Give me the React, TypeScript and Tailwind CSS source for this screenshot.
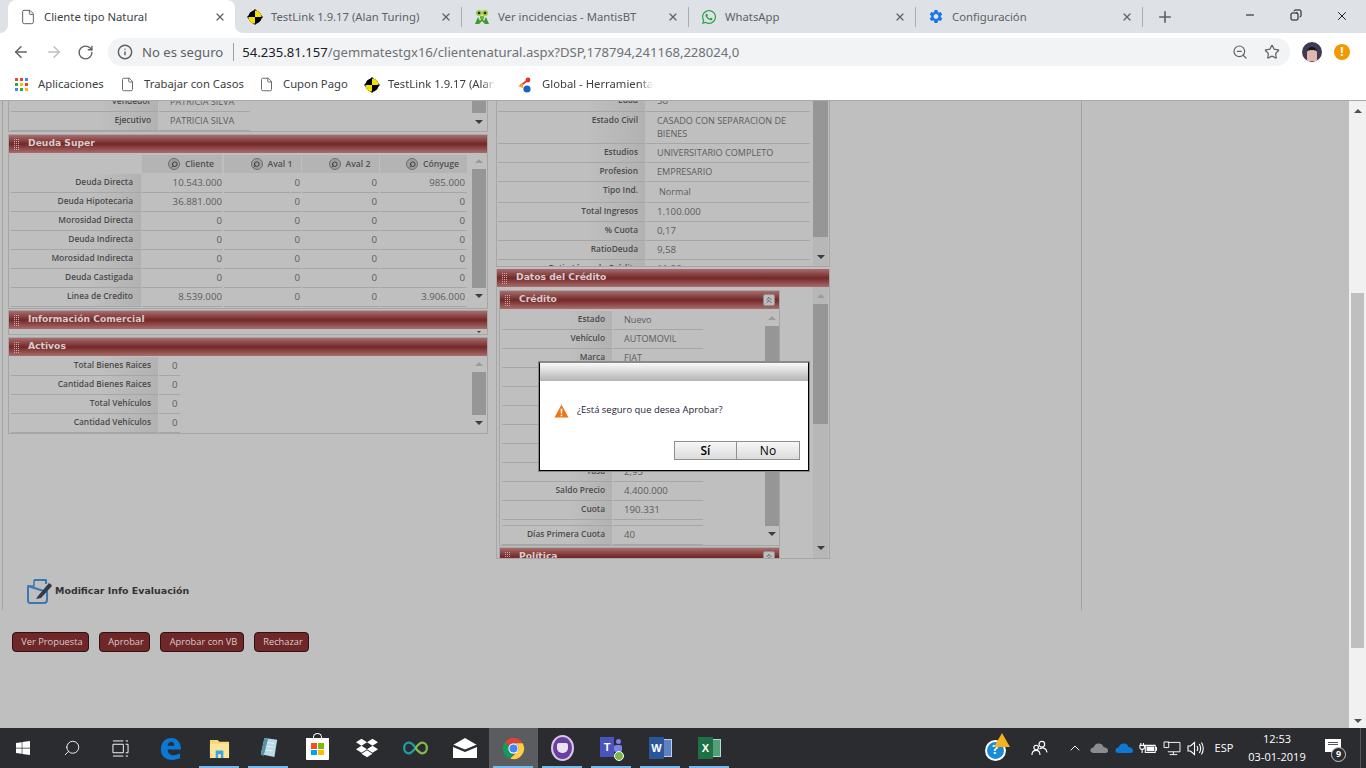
import type { ReactNode } from 'react'
import { ArrowLeft, ArrowRight, ChevronUp, ChevronsUp, Copy, File, Info, Minus, Plus, RotateCw, Search, Star, X, ZoomOut } from 'lucide-react'
import { FaDropbox, FaWhatsapp, FaWindows } from 'react-icons/fa'
import { MdSettings } from 'react-icons/md'

const ui = "font-['Open_Sans','Liberation_Sans',sans-serif]"

function Dummy({ className = 'w-4 h-4' }: { className?: string }) {
  return (
    <svg viewBox="0 0 16 16" className={className}>
      <path d="M0 8 L8 0 L16 8 L8 16 Z" fill="#000" />
      <circle cx="8" cy="8" r="6.6" fill="#000" />
      <path d="M8 8 V1.4 A6.6 6.6 0 0 1 14.6 8 Z" fill="#f4e000" />
      <path d="M8 8 V14.6 A6.6 6.6 0 0 1 1.4 8 Z" fill="#f4e000" />
    </svg>
  )
}

function Mantis() {
  return (
    <svg viewBox="0 0 16 16" className="w-4 h-4">
      <path d="M1 15 L4 8 L6 12 L8 9 L10 12 L12 8 L15 15 L11 15 L8 12 L5 15 Z" fill="#3f9a2a" />
      <circle cx="5" cy="4" r="3" fill="#9ccf3c" />
      <circle cx="11" cy="4" r="3" fill="#9ccf3c" />
      <circle cx="5" cy="4" r="1.3" fill="#222" />
      <circle cx="11" cy="4" r="1.3" fill="#222" />
      <path d="M6 7 H10 V10 H6 Z" fill="#6fb52e" />
    </svg>
  )
}

function GlobalIcon() {
  return (
    <svg viewBox="0 0 16 16" className="w-4 h-4">
      <path d="M3 9 L11 3" stroke="#e33" strokeWidth="2" />
      <circle cx="11" cy="3" r="2.4" fill="#e0322b" />
      <path d="M1 9 L6 6.5 L6 11 Z" fill="#f2a81d" />
      <circle cx="10" cy="12" r="3.6" fill="#1c62c4" />
    </svg>
  )
}

function AppsGrid() {
  const colors = ['bg-[#ea4335]', 'bg-[#ea4335]', 'bg-[#4285f4]', 'bg-[#34a853]', 'bg-[#fbbc05]', 'bg-[#ea4335]', 'bg-[#4285f4]', 'bg-[#34a853]', 'bg-[#fbbc05]']
  return (
    <div className="grid grid-cols-3 gap-[2px] w-[13px] h-[13px]">
      {colors.map((c, i) => <span key={i} className={`${c} w-[3px] h-[3px]`} />)}
    </div>
  )
}

function ChromeLogo() {
  return (
    <svg viewBox="0 0 24 24" className="w-[23px] h-[23px]">
      <path d="M12 1 A11 11 0 0 1 21.5 6.5 L12 6.5 A5.5 5.5 0 0 0 7.2 9.2 L2.9 5.6 A11 11 0 0 1 12 1 Z" fill="#db4437" />
      <path d="M2.9 5.6 L7.2 9.2 A5.5 5.5 0 0 0 12 17.5 L8.6 22.5 A11 11 0 0 1 2.9 5.6 Z" fill="#0f9d58" />
      <path d="M21.5 6.5 A11 11 0 0 1 8.6 22.5 L14.7 16.8 A5.5 5.5 0 0 0 12 6.5 Z" fill="#ffcd40" />
      <circle cx="12" cy="12" r="5.4" fill="#fff" />
      <circle cx="12" cy="12" r="4.2" fill="#4285f4" />
    </svg>
  )
}

const tabs: { title: string; icon: ReactNode }[] = [
  { title: 'Cliente tipo Natural', icon: <File className="w-4 h-4 text-[#5f6368]" strokeWidth={1.5} /> },
  { title: 'TestLink 1.9.17 (Alan Turing)', icon: <Dummy /> },
  { title: 'Ver incidencias - MantisBT', icon: <Mantis /> },
  { title: 'WhatsApp', icon: <FaWhatsapp className="w-4 h-4 text-[#25a244]" /> },
  { title: 'Configuración', icon: <MdSettings className="w-[17px] h-[17px] text-[#1a73e8]" /> },
]

function TabStrip() {
  return (
    <div className="h-[33px] bg-[#dee1e6] flex pl-[8px] relative">
      {tabs.map((t, i) => (
        <div
          key={t.title}
          className={
            i === 0
              ? 'w-[227px] h-[33px] flex items-center pl-[12px] bg-white rounded-t-lg text-[#3c4043] relative'
              : 'w-[227px] h-[33px] flex items-center pl-[12px] text-[#5f6368]'
          }
        >
          {i === 0 && (
            <>
              <span className="absolute bottom-0 -left-2 w-2 h-2 bg-white"><i className="block w-2 h-2 bg-[#dee1e6] rounded-br-lg" /></span>
              <span className="absolute bottom-0 -right-2 w-2 h-2 bg-white"><i className="block w-2 h-2 bg-[#dee1e6] rounded-bl-lg" /></span>
            </>
          )}
          <span className="w-4 flex justify-center shrink-0">{t.icon}</span>
          <span className="ml-2 pt-[2px] text-[11.3px] whitespace-nowrap">{t.title}</span>
          <X className="ml-auto mr-[9px] w-[12px] h-[12px] text-[#5f6368]" strokeWidth={2.5} />
          {i > 0 && <span className="w-px h-[20px] bg-[#a9acb0]" />}
        </div>
      ))}
      <div className="w-[44px] flex items-center justify-center">
        <Plus className="w-[18px] h-[18px] text-[#5f6368]" strokeWidth={2.2} />
      </div>
      <div className="ml-[40px] flex pt-[9px] text-[#111]">
        <div className="w-[46px] flex justify-center"><Minus className="w-[12px] h-[12px]" strokeWidth={2} /></div>
        <div className="w-[46px] flex justify-center"><Copy className="w-[12px] h-[12px] -scale-x-100" strokeWidth={2} /></div>
        <div className="w-[46px] flex justify-center"><X className="w-[14px] h-[14px]" strokeWidth={1.6} /></div>
      </div>
    </div>
  )
}

function Toolbar() {
  return (
    <div className="h-[38px] bg-white flex items-center text-[#5f6368]">
      <div className="w-[108px] flex items-center pl-[12px] gap-[15px]">
        <ArrowLeft className="w-[18px] h-[18px]" strokeWidth={2} />
        <ArrowRight className="w-[18px] h-[18px] text-[#bdc1c6]" strokeWidth={2} />
        <RotateCw className="w-[17px] h-[17px] -ml-px" strokeWidth={2} />
      </div>
      <div className="w-[1182px] h-[28px] rounded-full bg-[#f1f3f4] flex items-center pl-[9px] pr-[10px]">
        <Info className="w-[16px] h-[16px]" strokeWidth={2.2} />
        <span className="ml-[9px] pt-[2px] text-[13.1px] text-[#5f6368] whitespace-nowrap">No es seguro</span>
        <span className="ml-[10px] w-px h-[18px] bg-[#9aa0a6]" />
        <span className="ml-[8px] pt-[2px] text-[13.1px] text-[#6e7276] whitespace-nowrap"><span className="text-[#202124]">54.235.81.157</span>/gemmatestgx16/clientenatural.aspx?DSP,178794,241168,228024,0</span>
        <ZoomOut className="ml-auto w-[16px] h-[16px]" strokeWidth={1.8} />
        <Star className="ml-[16px] w-[16px] h-[16px]" strokeWidth={1.8} />
      </div>
      <div className="ml-[12px] w-[20px] h-[20px] rounded-full bg-[#3b3b55] flex items-center justify-center overflow-hidden">
        <div className="w-[10px] h-[14px] mt-[4px] rounded-t-full bg-[#e2b7ae] border-t-[3px] border-[#1a1414]" />
      </div>
      <div className="ml-[12px] w-[16px] h-[16px] rounded-full bg-[#f29900] text-white flex items-center justify-center text-[12px] font-bold">!</div>
    </div>
  )
}

function Bookmarks() {
  return (
    <div className="h-[30px] pb-[2px] bg-white flex items-center text-[11.3px] text-[#3c4043] pl-[15px] whitespace-nowrap border-b border-[#a8a8a8]">
      <AppsGrid />
      <span className="ml-[10px] w-[66px]">Aplicaciones</span>
      <File className="ml-[16px] w-[15px] h-[15px] text-[#5f6368]" strokeWidth={1.5} />
      <span className="ml-[9px] w-[99px]">Trabajar con Casos</span>
      <File className="ml-[16px] w-[15px] h-[15px] text-[#5f6368]" strokeWidth={1.5} />
      <span className="ml-[9px] w-[65px]">Cupon Pago</span>
      <span className="ml-[16px]"><Dummy /></span>
      <span className="ml-[8px] w-[107px] overflow-hidden [mask-image:linear-gradient(to_right,black_88%,transparent)]">TestLink 1.9.17 (Alan Turing)</span>
      <span className="ml-[22px]"><GlobalIcon /></span>
      <span className="ml-[9px] w-[111px] overflow-hidden [mask-image:linear-gradient(to_right,black_88%,transparent)]">Global - Herramientas</span>
    </div>
  )
}

function ScrollBar({ thumb, track = 'w-[14px]', before = 'h-[8px]', pin = false }: { thumb: string; track?: string; before?: string; pin?: boolean }) {
  return (
    <div className={`${track} shrink-0 flex flex-col items-center h-full`}>
      <div className={`${before} w-full flex items-center justify-center shrink-0`}>
        <span className="w-0 h-0 border-x-[4px] border-x-transparent border-b-[4px] border-b-[#9c9c9c]" />
      </div>
      <div className={`${thumb} w-full bg-[#969696] shrink-0`} />
      <div className={pin ? 'mt-auto mb-[2px] h-[16px] flex items-center justify-center' : 'h-[16px] flex items-center justify-center'}>
        <span className="w-0 h-0 border-x-[4px] border-x-transparent border-t-[4px] border-t-[#3d3d3d]" />
      </div>
    </div>
  )
}

function BarHeader({ title, right, size = 'h-[18px]' }: { title: string; right?: ReactNode; size?: string }) {
  return (
    <div className={`${size} shrink-0 flex items-center bg-gradient-to-b from-[#a86d6d] via-[#722828] to-[#a86d6d] pl-[5px] pr-[2px]`}>
      <span className="grid grid-cols-3 gap-[1px] w-[5px]">
        {Array.from({ length: 18 }).map((_, i) => <i key={i} className="w-px h-px bg-[#c9a7a7]" />)}
      </span>
      <span className="ml-[9px] pb-[2px] text-[9.2px] font-bold text-[#d9cbcb] font-['DejaVu_Sans',sans-serif] whitespace-nowrap">{title}</span>
      {right}
    </div>
  )
}

function Collapse() {
  return (
    <span className="ml-auto w-[12px] h-[12px] mr-[2px] rounded-[2px] bg-[#bdbdbd] border border-[#8d8d8d] flex items-center justify-center">
      <ChevronsUp className="w-[10px] h-[10px] text-[#444]" strokeWidth={2} />
    </span>
  )
}

function valueSize(v: ReactNode) {
  return typeof v === 'string' && /^[\d.,]+$/.test(v) ? 'text-[9.7px]' : 'text-[9.1px]'
}

function Row({ label, value, labelW, valueW, cls = 'h-[19px]', indent = 'pl-[11px]' }: { label: string; value: ReactNode; labelW: string; valueW: string; cls?: string; indent?: string }) {
  return (
    <div className={`${cls} flex gap-[1px] shrink-0`}>
      <div className={`${labelW} shrink-0 border-b border-[#a6a6a6] bg-gradient-to-r from-[#bfbfbf] from-60% to-[#b2b2b2] text-right pr-[7px] text-[8.4px] leading-[16px] font-semibold text-[#4b4b4b] whitespace-nowrap`}>{label}</div>
      <div className={`${valueW} shrink-0 border-b border-[#a6a6a6] ${indent} ${valueSize(value)} leading-[17px] text-[#5d5d5d]`}>{value}</div>
    </div>
  )
}

const deuda: [string, string, string, string, string][] = [
  ['Deuda Directa', '10.543.000', '0', '0', '985.000'],
  ['Deuda Hipotecaria', '36.881.000', '0', '0', '0'],
  ['Morosidad Directa', '0', '0', '0', '0'],
  ['Deuda Indirecta', '0', '0', '0', '0'],
  ['Morosidad Indirecta', '0', '0', '0', '0'],
  ['Deuda Castigada', '0', '0', '0', '0'],
  ['Linea de Credito', '8.539.000', '0', '0', '3.906.000'],
]

const debtCols = ['w-[80px] ml-px', 'w-[77px] ml-[2px] pr-px', 'w-[77px] ml-px pr-[2px]', 'w-[87px] ml-px pr-[2px]']
const headCols = ['w-[80px] ml-px', 'w-[77px] ml-[2px]', 'w-[77px] ml-px', 'w-[87px] ml-px']

function DebtTable() {
  const heads = ['Cliente', 'Aval 1', 'Aval 2', 'Cónyuge']
  return (
    <div className="flex-1 pl-[2px] flex flex-col">
      <div className="h-[21px] flex pt-[2px] shrink-0">
        <div className="w-[130px] shrink-0" />
        {heads.map((h, i) => (
          <div key={h} className={`${headCols[i]} h-[18px] bg-[#b4b4b4] flex items-center justify-center gap-[5px] pl-[18px] text-[8.6px] font-semibold text-[#4f4f4f] shrink-0`}>
            <span className="w-[12px] h-[12px] rounded-full border border-[#6d6d6d] bg-[#9f9f9f] flex items-center justify-center"><Search className="w-[7px] h-[7px] -scale-x-100 text-[#333]" strokeWidth={3} /></span>
            {h}
          </div>
        ))}
      </div>
      {deuda.map((r) => (
        <div key={r[0]} className="h-[19px] flex shrink-0">
          <div className="w-[130px] shrink-0 border-b border-[#a6a6a6] bg-gradient-to-r from-[#bfbfbf] from-60% to-[#b2b2b2] text-right pr-[8px] text-[8.4px] leading-[16px] font-semibold text-[#4b4b4b]">{r[0]}</div>
          {r.slice(1).map((v, i) => (
            <div key={i} className={`${debtCols[i]} shrink-0 border-b border-[#a6a6a6] text-right text-[9.7px] leading-[17px] text-[#5d5d5d]`}>{v}</div>
          ))}
        </div>
      ))}
    </div>
  )
}

function LeftColumn() {
  return (
    <div className="w-[480px] shrink-0 flex flex-col">
      <div className="h-[31px] shrink-0 border-x border-b border-[#a6a6a6] flex overflow-hidden">
        <div className="flex-1 pl-[2px] -mt-[8px]">
          <Row label="Vendedor" value="PATRICIA SILVA" labelW="w-[147px]" valueW="w-[91px]" />
          <Row label="Ejecutivo" value="PATRICIA SILVA" labelW="w-[147px]" valueW="w-[91px]" />
        </div>
        <div className="w-[14px] mr-px flex flex-col items-center">
          <div className="h-[12px] w-full bg-[#969696]" />
          <div className="h-[18px] flex items-center"><span className="w-0 h-0 border-x-[4px] border-x-transparent border-t-[4px] border-t-[#3d3d3d]" /></div>
        </div>
      </div>
      <div className="mt-[2px] h-[175px] shrink-0 border border-[#a6a6a6] flex flex-col">
        <BarHeader title="Deuda Super" />
        <div className="flex flex-1 overflow-hidden">
          <DebtTable />
          <div className="pr-px h-full">
            <ScrollBar thumb="h-[119px]" before="h-[16px]" />
          </div>
        </div>
      </div>
      <div className="mt-[1px] h-[25px] shrink-0 border border-[#a6a6a6] flex flex-col overflow-hidden">
        <BarHeader title="Información Comercial" />
        <div className="flex justify-end pr-[6px] pt-[2px]"><span className="w-0 h-0 border-x-[2px] border-x-transparent border-t-[2px] border-t-[#3d3d3d]" /></div>
      </div>
      <div className="mt-[2px] h-[97px] shrink-0 border border-[#a6a6a6] flex flex-col">
        <BarHeader title="Activos" />
        <div className="flex flex-1 overflow-hidden">
          <div className="flex-1 pl-[2px] pt-[1px]">
            {['Total Bienes Raices', 'Cantidad Bienes Raices', 'Total Vehículos', 'Cantidad Vehículos'].map((l) => (
              <Row key={l} label={l} value="0" labelW="w-[147px]" valueW="w-[21px]" indent="pl-[13px]" />
            ))}
          </div>
          <div className="pr-px h-full">
            <ScrollBar thumb="h-[43px]" before="h-[16px]" />
          </div>
        </div>
      </div>
    </div>
  )
}

const personal: [string, ReactNode, string][] = [
  ['Edad', '58', 'h-[20px]'],
  ['Estado Civil', <span className="block leading-[13px] pt-[2px] w-[150px]">CASADO CON SEPARACION DE BIENES</span>, 'h-[32px]'],
  ['Estudios', 'UNIVERSITARIO COMPLETO', 'h-[19px]'],
  ['Profesion', 'EMPRESARIO', 'h-[19px]'],
  ['Tipo Ind.', <span className="pl-[2px] leading-[20px]">Normal</span>, 'h-[21px]'],
  ['Total Ingresos', '1.100.000', 'h-[19px]'],
  ['% Cuota', '0,17', 'h-[19px]'],
  ['RatioDeuda', '9,58', 'h-[19px]'],
  ['Ratio Línea de Crédito', '11,86', 'h-[19px]'],
]

const credito: [string, string, string][] = [
  ['Estado', 'Nuevo', 'h-[19px]'],
  ['Vehículo', 'AUTOMOVIL', 'h-[19px]'],
  ['Marca', 'FIAT', 'h-[19px]'],
  ['', '', 'h-[19px]'],
  ['', '', 'h-[19px]'],
  ['', '', 'h-[19px]'],
  ['', '', 'h-[19px]'],
  ['', '', 'h-[19px]'],
  ['Tasa', '2,95', 'h-[19px]'],
  ['Saldo Precio', '4.400.000', 'h-[19px]'],
  ['Cuota', '190.331', 'h-[19px]'],
  ['', '', 'h-[6px]'],
  ['Días Primera Cuota', '40', 'h-[19px]'],
]

function MiddleColumn() {
  return (
    <div className="w-[334px] shrink-0 flex flex-col">
      <div className="h-[166px] shrink-0 border-x border-b border-[#a6a6a6] flex overflow-hidden">
        <div className="flex-1 pl-[1px] -mt-[9px]">
          {personal.map(([l, v, h]) => (
            <Row key={l} label={l} value={v} labelW="w-[147px]" valueW="w-[164px]" cls={h} />
          ))}
        </div>
        <div className="w-[15px] mr-px flex flex-col items-center bg-[#b7b7b7]">
          <div className="h-[136px] w-full bg-[#969696]" />
          <div className="mt-auto h-[16px] mb-[1px] flex items-center"><span className="w-0 h-0 border-x-[4px] border-x-transparent border-t-[4px] border-t-[#3d3d3d]" /></div>
        </div>
      </div>
      <div className="mt-[2px] h-[290px] shrink-0 border-x border-b border-[#a6a6a6] flex flex-col overflow-hidden">
        <BarHeader title="Datos del Crédito" />
        <div className="flex flex-1 overflow-hidden">
          <div className="flex-1 pl-[2px] pt-[3px] flex flex-col">
            <div className="w-[281px] h-[256px] shrink-0 border border-[#a6a6a6] flex flex-col">
              <BarHeader title="Crédito" right={<Collapse />} />
              <div className="flex flex-1">
                <div className="flex-1 pl-[2px] pt-[2px]">
                  {credito.map(([l, v, h], i) => (
                    <Row key={i} label={l} value={v} labelW="w-[110px]" valueW="w-[90px]" cls={h} indent="pl-[11px]" />
                  ))}
                </div>
                <ScrollBar thumb="h-[200px]" before="h-[17px]" />
              </div>
            </div>
            <div className="w-[281px] mt-[1px] border border-[#a6a6a6]">
              <BarHeader title="Política" right={<Collapse />} />
            </div>
          </div>
          <div className="w-[15px] mr-px bg-[#b7b7b7] h-full">
            <ScrollBar track="w-[15px]" thumb="h-[120px]" before="h-[17px]" pin />
          </div>
        </div>
      </div>
    </div>
  )
}

function ConfirmDialog() {
  return (
    <div className="absolute left-[539px] top-[261px] w-[270px] h-[109px] bg-white border border-black border-t-[#8a8a8a] flex flex-col shadow-[0_0_0_1px_#8a8a8a]">
      <div className="h-[18px] shrink-0 bg-gradient-to-b from-[#fafafa] to-[#b4b4b4]" />
      <div className="pl-[14px] pt-[19px] flex items-center h-[40px]">
        <svg viewBox="0 0 16 15" className="w-[15px] h-[14px]">
          <path d="M8 0.5 L15.5 14.5 H0.5 Z" fill="#f0741a" />
          <path d="M7 5 H9 L8.6 10.5 H7.4 Z M7.2 11.5 H8.8 V13 H7.2 Z" fill="#fff" />
        </svg>
        <span className="ml-[8px] text-[9.45px] text-[#1b1b3a]">¿Está seguro que desea Aprobar?</span>
      </div>
      <div className="flex justify-end pr-[8px] mt-[20px]">
        <button className="w-[63px] h-[19px] bg-gradient-to-b from-[#f7f7f7] to-[#dcdcdc] border border-[#8f8f8f] text-[12px] leading-none font-semibold text-black">Sí</button>
        <button className="w-[63px] h-[19px] bg-gradient-to-b from-[#f7f7f7] to-[#dcdcdc] border border-[#8f8f8f] border-l-0 text-[12px] leading-none text-black">No</button>
      </div>
    </div>
  )
}

function ModifyIcon() {
  return (
    <svg viewBox="0 0 26 26" className="w-[26px] h-[26px]">
      <path d="M8 2 H20 V6 M21 14 V22 Q21 25 18 25 H4 Q2 25 2 22 V8 Z" fill="none" stroke="#3b78b3" strokeWidth="2" strokeLinejoin="round" />
      <path d="M8 2 V8 H2" fill="none" stroke="#3b78b3" strokeWidth="1.5" />
      <path d="M12 18 L23 5 Q25 6 26 8 L15 20 L10 21 Z" fill="#333b4a" />
    </svg>
  )
}

function Content() {
  const actions = [
    { t: 'Ver Propuesta', w: 'w-[77px]' },
    { t: 'Aprobar', w: 'w-[51px]' },
    { t: 'Aprobar con VB', w: 'w-[84px]' },
    { t: 'Rechazar', w: 'w-[55px]' },
  ]
  return (
    <div className={`flex-1 min-h-0 flex bg-[#bfbfbf] ${ui}`}>
      <div className="flex-1 relative overflow-hidden">
        <div className="ml-[2px] w-[1080px] h-[509px] border-x border-[#a3a3a3] flex flex-col">
          <div className="h-[477px] shrink-0 flex pl-[5px] gap-[8px]">
            <LeftColumn />
            <MiddleColumn />
          </div>
          <div className="pl-[23px] flex items-center h-[26px]">
            <ModifyIcon />
            <span className="ml-[3px] text-[9.45px] font-bold text-[#333] font-['DejaVu_Sans',sans-serif] whitespace-nowrap">Modificar Info Evaluación</span>
          </div>
        </div>
        <div className="mt-[22px] pl-[12px] flex gap-[10px]">
          {actions.map((a) => (
            <div key={a.t} className={`${a.w} h-[20px] rounded-[4px] bg-[#6f2727] border border-[#2d1414] pl-[3px] flex items-center justify-center text-[9.3px] text-[#d8cccc]`}>{a.t}</div>
          ))}
        </div>
        <ConfirmDialog />
      </div>
      <div className="w-[17px] bg-[#f1f1f1] flex flex-col items-center">
        <div className="h-[192px] w-full pt-[8px] flex justify-center"><span className="w-0 h-0 border-x-[4px] border-x-transparent border-b-[4px] border-b-[#505050]" /></div>
        <div className="h-[355px] w-[13px] bg-[#bfbfbf]" />
        <div className="mt-auto h-[14px] flex items-center"><span className="w-0 h-0 border-x-[4px] border-x-transparent border-t-[4px] border-t-[#505050]" /></div>
      </div>
    </div>
  )
}

function Slot({ children, active, open }: { children: ReactNode; active?: boolean; open?: boolean }) {
  return (
    <div className={active ? 'w-[49px] h-10 flex items-center justify-center relative bg-[#5a5c5f]' : 'w-[49px] h-10 flex items-center justify-center relative'}>
      {children}
      {open && <span className="absolute bottom-0 left-[4px] right-[5px] h-[2px] bg-[#76b9ed]" />}
    </div>
  )
}

function OfficeTile({ letter, dark, light }: { letter: string; dark: string; light: string }) {
  return (
    <div className="relative w-[23px] h-[22px]">
      <div className={`absolute right-0 top-[2px] w-[14px] h-[18px] ${light} border border-white/60`} />
      <div className={`absolute left-0 top-0 w-[15px] h-[22px] ${dark} flex items-center justify-center text-white text-[11px] font-bold font-['Liberation_Sans',sans-serif]`}>{letter}</div>
    </div>
  )
}

function TrayClouds({ fill }: { fill: string }) {
  return (
    <svg viewBox="0 0 20 13" className="w-[18px] h-[12px]">
      <path d="M4 12 Q0 12 0.5 8.5 Q1 6 4 6 Q5.5 1 10.5 1.5 Q14 2 15 5.5 Q20 6 20 9.5 Q20 12 17 12 Z" fill={fill} />
    </svg>
  )
}

function Taskbar() {
  return (
    <div className={`h-10 bg-[#2a2c30] flex text-white shrink-0 ${ui}`}>
      <div className="w-[46px] flex items-center justify-center"><FaWindows className="w-[16px] h-[16px]" /></div>
      <div className="w-[52px] flex items-center justify-center"><Search className="w-[18px] h-[18px] -scale-x-100" strokeWidth={1.2} /></div>
      <div className="w-[44px] mr-[4px] flex items-center justify-center">
        <svg viewBox="0 0 18 18" className="w-[17px] h-[17px]" fill="none" stroke="#fff" strokeWidth="1">
          <path d="M1 1 H12 M1 17 H12 M1 4.5 H12 V13.5 H1 Z M14.5 4.5 H17 V13.5 H14.5 M14.5 1 H17 M14.5 17 H17" />
        </svg>
      </div>
      <Slot>
        <svg viewBox="0 0 24 24" className="w-[23px] h-[23px]">
          <path d="M2 13 C2 5 7 1 13 1 C19 1 23 6 23 13 H9 C9 17 12 19 15 19 C18 19 20 18 22 17 V22 C20 23 17 24 14 24 C7 24 2 20 2 13 Z M9 9 H16 C16 6 14 5 12.5 5 C11 5 9 7 9 9 Z" fill="#0a78d7" />
        </svg>
      </Slot>
      <Slot open>
        <svg viewBox="0 0 22 22" className="w-[21px] h-[21px]">
          <path d="M1 2 H9 L11 4 H21 V21 H1 Z" fill="#f6d774" />
          <path d="M1 6 H21 V21 H1 Z" fill="#fae69a" />
          <path d="M7 13 H15 V21 H12.5 V17 H9.5 V21 H7 Z" fill="#37a5e6" />
        </svg>
      </Slot>
      <Slot open>
        <svg viewBox="0 0 22 24" className="w-[20px] h-[22px]">
          <path d="M6 1 L20 3 L17 22 L2 19 Z" fill="#b9dbe6" />
          <path d="M6 1 L10 2 L5 21 L2 19 Z" fill="#5a8fa5" />
          <path d="M9 6 L17 7 M8 10 L16 11 M8 14 L15 15" stroke="#e8f3f6" strokeWidth="1" />
        </svg>
      </Slot>
      <Slot>
        <div className="relative w-[23px] h-[22px] mt-[2px] bg-white rounded-b-[1px] grid grid-cols-2 gap-px p-[5px]">
          <span className="absolute left-[7px] -top-[5px] w-[9px] h-[7px] border border-white border-b-0 rounded-t-full" />
          <i className="bg-[#f25022]" /><i className="bg-[#7fba00]" /><i className="bg-[#00a4ef]" /><i className="bg-[#ffb900]" />
        </div>
      </Slot>
      <Slot><FaDropbox className="w-[22px] h-[22px] text-white" /></Slot>
      <Slot>
        <svg viewBox="0 0 26 14" className="w-[25px] h-[14px]" fill="none" strokeWidth="2.4">
          <path d="M13 7 C10 2 8 1.5 6 1.5 C3 1.5 1.2 4 1.2 7 C1.2 10 3 12.5 6 12.5 C8 12.5 10 11 13 7" stroke="#1f9ba8" />
          <path d="M13 7 C16 3 18 1.5 20 1.5 C23 1.5 24.8 4 24.8 7 C24.8 10 23 12.5 20 12.5 C18 12.5 16 11 13 7" stroke="#7fb94a" />
        </svg>
      </Slot>
      <Slot>
        <svg viewBox="0 0 24 20" className="w-[24px] h-[20px]">
          <path d="M0 7 L12 0 L24 7 L12 12 Z" fill="#fff" />
          <path d="M0 9 L12 14 L24 9 V20 H0 Z" fill="#fff" />
          <path d="M0 7 L12 12 L24 7" fill="none" stroke="#2a2c30" strokeWidth="1" />
        </svg>
      </Slot>
      <Slot active open><ChromeLogo /></Slot>
      <Slot open>
        <div className="w-[23px] h-[26px] rounded-[50%] bg-[#6b3fa0] border-2 border-[#d8c8e8] flex items-center justify-center">
          <div className="w-[11px] h-[10px] bg-[#e9e2f0] rounded-b-[5px] rounded-t-[2px]" />
        </div>
      </Slot>
      <Slot open>
        <div className="relative w-[23px] h-[22px]">
          <div className="absolute left-0 top-0 w-[14px] h-[20px] bg-[#4b53bc] flex items-center justify-center text-[11px] font-bold font-['Liberation_Sans',sans-serif]">T</div>
          <span className="absolute right-[2px] top-[2px] w-[5px] h-[5px] rounded-full bg-[#7b83eb]" />
          <span className="absolute right-[1px] top-[8px] w-[8px] h-[7px] rounded-[2px] bg-[#7b83eb]" />
          <span className="absolute right-[-1px] bottom-[-2px] w-[10px] h-[10px] rounded-full bg-[#7ab648] border border-white" />
        </div>
      </Slot>
      <Slot open><OfficeTile letter="W" dark="bg-[#2b579a]" light="bg-[#5b83c4]" /></Slot>
      <Slot open><OfficeTile letter="X" dark="bg-[#1e7145]" light="bg-[#52a079]" /></Slot>

      <div className="ml-[241px] flex items-center">
        <div className="w-[40px] flex justify-center relative">
          <div className="w-[21px] h-[21px] mt-[4px] rounded-full bg-[#1b8bd6] border-2 border-white flex items-center justify-center text-[12px] font-bold">?</div>
          <span className="absolute left-[19px] -top-[3px] w-0 h-0 border-x-[8px] border-x-transparent border-b-[14px] border-b-[#f5b120]" />
        </div>
        <div className="w-[48px] flex justify-center">
          <svg viewBox="0 0 18 18" className="w-[17px] h-[17px]" fill="none" stroke="#fff" strokeWidth="1.2">
            <circle cx="11.5" cy="4.5" r="3" /><circle cx="5.5" cy="8" r="2.4" />
            <path d="M1 16 C1 12 3 11 5.5 11 C8 11 9.5 12.5 9.5 16 M9 9.5 C12 7.5 16 8 17 13" />
          </svg>
        </div>
        <div className="w-[24px] flex justify-center"><ChevronUp className="w-[16px] h-[16px]" strokeWidth={1.4} /></div>
        <div className="w-[24px] flex justify-center"><TrayClouds fill="#8a8c8f" /></div>
        <div className="w-[25px] flex justify-center"><TrayClouds fill="#0f78d4" /></div>
        <div className="w-[23px] flex justify-center">
          <svg viewBox="0 0 20 14" className="w-[18px] h-[13px]" fill="none" stroke="#fff" strokeWidth="1.2">
            <path d="M7 3.5 H18 V11.5 H7 Z M18 6 H19.5 V9 H18" />
            <path d="M9 5.5 H16 V9.5 H9 Z" fill="#fff" />
            <path d="M2 1 V3.5 M5 1 V3.5 M1 3.5 H6 V6 Q6 8 3.5 8 Q1 8 1 6 Z M3.5 8 V12" />
          </svg>
        </div>
        <div className="w-[25px] flex justify-center">
          <svg viewBox="0 0 19 16" className="w-[18px] h-[15px]" fill="none" stroke="#fff" strokeWidth="1">
            <path d="M5 1.5 H18 V11.5 H5 M11 11.5 V14.5 M7 14.5 H15 M1 1 H6 V7 H1 Z" />
          </svg>
        </div>
        <div className="w-[23px] flex justify-center">
          <svg viewBox="0 0 17 15" className="w-[17px] h-[15px]" fill="none" stroke="#fff" strokeWidth="1.1">
            <path d="M1 5 H3.5 L7.5 1.5 V13.5 L3.5 10 H1 Z M10 5 Q11.5 7.5 10 10 M12.3 3 Q15 7.5 12.3 12 M14.5 1.5 Q18 7.5 14.5 13.5" />
          </svg>
        </div>
        <div className="w-[34px] text-center text-[11px]">ESP</div>
        <div className="w-[72px] text-center text-[11px] leading-[18px]">
          <div>12:53</div>
          <div>03-01-2019</div>
        </div>
        <div className="w-[40px] flex justify-center relative">
          <div className="w-[16px] h-[13px] -mt-[6px] bg-white flex flex-col gap-px px-[3px] py-[3px]">
            <i className="h-px bg-[#555]" /><i className="h-px bg-[#555]" />
          </div>
          <span className="absolute left-[18px] top-[2px] w-[15px] h-[15px] rounded-full bg-[#2a2c30] border border-[#ccc] flex items-center justify-center text-[9px] font-bold">9</span>
        </div>
        <div className="ml-[7px] w-px h-10 bg-[#55575a]" />
      </div>
    </div>
  )
}

export default function App() {
  return (
    <div className="w-[1366px] h-screen flex flex-col overflow-hidden bg-white">
      <div className="font-['Noto_Sans',sans-serif] shrink-0">
        <TabStrip />
        <Toolbar />
        <Bookmarks />
      </div>
      <Content />
      <Taskbar />
    </div>
  )
}
